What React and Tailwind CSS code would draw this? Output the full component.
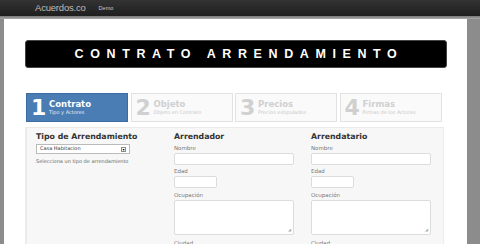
import React from 'react';

const steps = [
  { n: '1', title: 'Contrato', sub: 'Tipo y Actores', active: true },
  { n: '2', title: 'Objeto', sub: 'Objeto en Contrato' },
  { n: '3', title: 'Precios', sub: 'Precios estipulados' },
  { n: '4', title: 'Firmas', sub: 'Firmas de los Actores' },
];

const Field = ({ label, className }) => (
  <div className="mt-[2px]">
    <div className="text-[5.5px] text-[#777] leading-[9px]">{label}</div>
    <div className={`bg-white border border-[#dcdcdc] rounded-[2px] ${className}`} />
  </div>
);

const Actor = ({ title }) => (
  <div className="flex flex-col">
    <h3 className="text-[7.8px] font-bold text-[#333] leading-[10px]">{title}</h3>
    <Field label="Nombre" className="w-[120px] h-[12px]" />
    <Field label="Edad" className="w-[43px] h-[12px]" />
    <div className="mt-[3px]">
      <div className="text-[5.5px] text-[#777] leading-[9px]">Ocupación</div>
      <div className="relative w-[120px] h-[35px] bg-white border border-[#dcdcdc] rounded-[2px]">
        <span className="absolute right-[2px] bottom-[1px] text-[4px] text-[#aaa]">◢</span>
      </div>
    </div>
    <div className="text-[5.5px] text-[#777] leading-[9px] mt-[4px]">Ciudad</div>
  </div>
);

const App = () => {
  return (
    <div className="w-[480px] h-[244px] overflow-hidden bg-[#8c8c8c] font-['DejaVu_Sans',sans-serif]">
      <div className="h-[16px] bg-gradient-to-b from-[#333] to-[#1f1f1f] flex items-center pl-[35px] gap-[13px] font-['Liberation_Sans',sans-serif]">
        <span className="text-[9.5px] text-[#bdbdbd] tracking-[-0.2px]">Acuerdos.co</span>
        <span className="text-[5.5px] text-[#c8c8c8]">Demo</span>
      </div>
      <div className="h-[3px] bg-gradient-to-b from-[#777] to-[#aaa]" />
      <div className="ml-[4px] w-[463px] h-[225px] bg-white pt-[21px] pl-[21px] pr-[20px]">
        <div className="h-[28px] bg-black rounded-[3px] border border-[#444] flex items-center justify-center">
          <span className="text-white font-bold text-[12.5px] tracking-[6.6px] pl-[6px] font-['Liberation_Sans',sans-serif]">
            CONTRATO ARRENDAMIENTO
          </span>
        </div>
        <div className="flex gap-[2.5px] mt-[25px] pl-[1px]">
          {steps.map((s) => (
            <div
              key={s.n}
              className={`w-[102px] h-[29px] flex items-center pl-[4px] border ${
                s.active
                  ? 'bg-[#4a7db3] border-[#3d6d9f] text-white'
                  : 'bg-[#fafafa] border-[#e2e2e2] text-[#d0d0d0]'
              }`}
            >
              <span className="text-[22px] font-bold leading-none w-[16px]">{s.n}</span>
              <div className="flex flex-col ml-[2px]">
                <span className="text-[8.5px] font-bold leading-[10px]">{s.title}</span>
                <span className={`text-[5px] leading-[7px] ${s.active ? 'text-[#e8eef5]' : 'text-[#c8c8c8]'}`}>{s.sub}</span>
              </div>
            </div>
          ))}
        </div>
        <div className="mt-[5px] w-[419px] h-[120px] bg-[#f7f7f7] border-l-[2px] border-t border-r border-[#ebebeb] pl-[9px] pt-[4px] flex">
          <div className="w-[138px]">
            <h3 className="text-[7.8px] font-bold text-[#333] leading-[10px]">Tipo de Arrendamiento</h3>
            <div className="mt-[2px] w-[94px] h-[10px] bg-white border border-[#bbb] flex items-center justify-between px-[3px]">
              <span className="text-[5px] text-[#333]">Casa Habitacion</span>
              <span className="w-[5px] h-[5px] border border-[#888] text-[4px] leading-[3px] text-center">▾</span>
            </div>
            <div className="text-[5px] text-[#666] mt-[4px]">Selecciona un tipo de arrendamiento</div>
          </div>
          <div className="w-[137px]">
            <Actor title="Arrendador" />
          </div>
          <div>
            <Actor title="Arrendatario" />
          </div>
        </div>
      </div>
    </div>
  );
};

export default App;
